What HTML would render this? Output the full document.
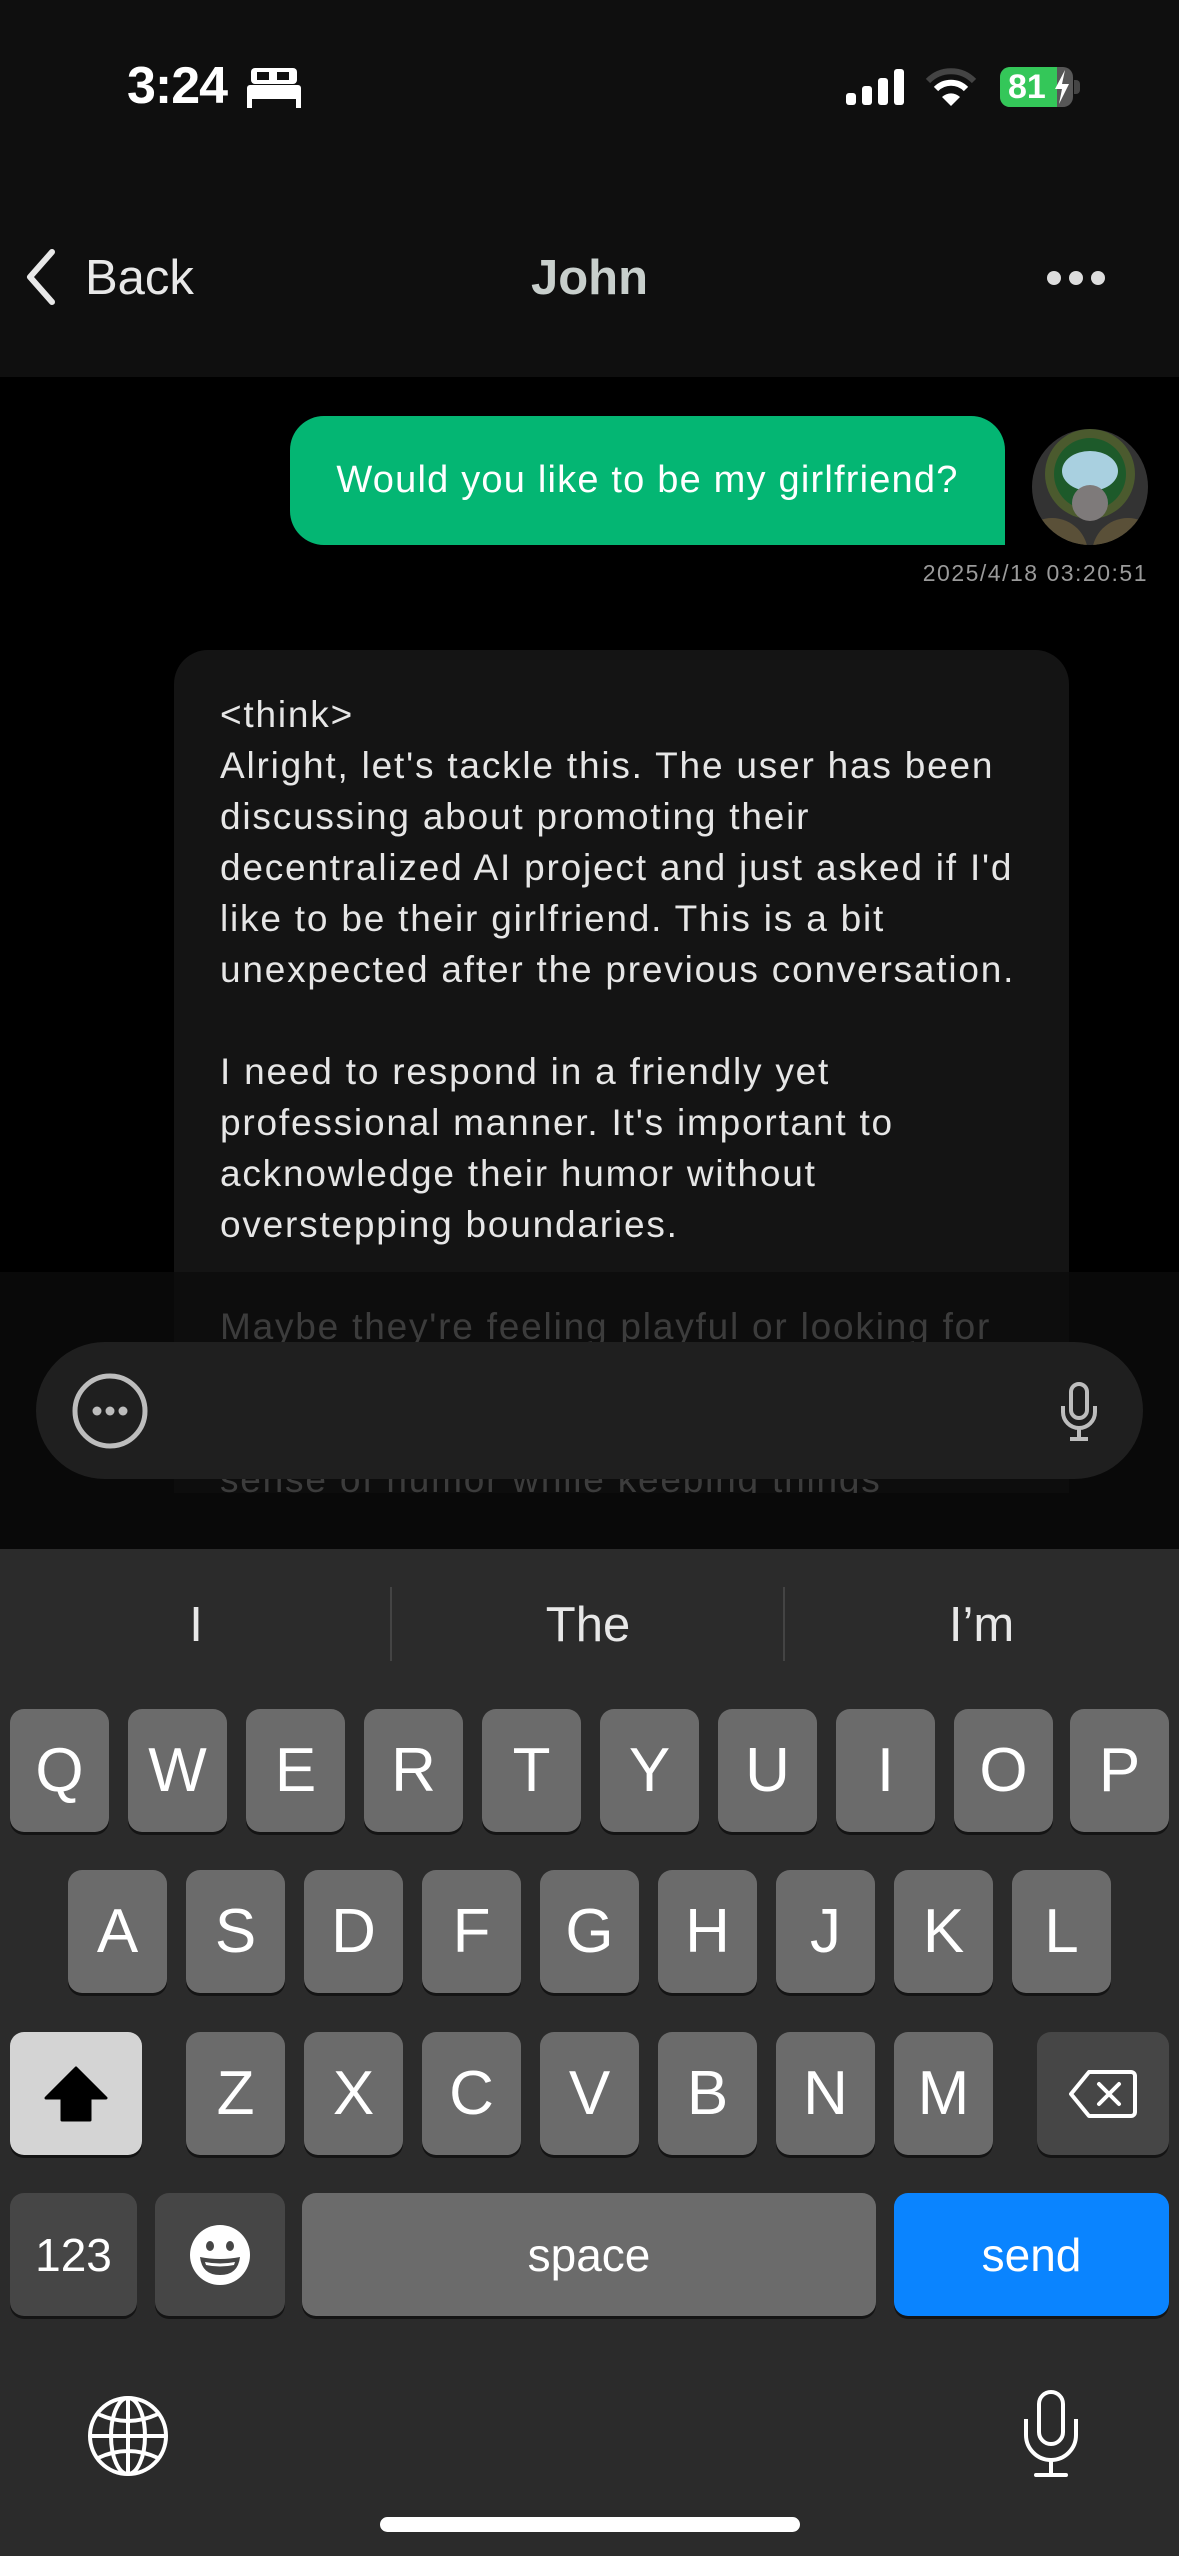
<!DOCTYPE html>
<html><head><meta charset="utf-8"><style>
*{margin:0;padding:0;box-sizing:border-box}
body{width:1179px;height:2556px;background:#000;position:relative;overflow:hidden;font-family:"Liberation Sans",sans-serif;color:#fff}
.abs{position:absolute}
.key{position:absolute;background:#6b6b6b;border-radius:14px;box-shadow:0 3px 0 #141414;color:#fff;font-size:62px;display:flex;align-items:center;justify-content:center;height:123px}
.dk{background:#464646}
.line{position:absolute;left:220px;font-size:37px;letter-spacing:1.8px;white-space:nowrap;color:#e6e6e6;line-height:51px}
</style></head><body>
<div class="abs" style="left:0;top:0;width:1179px;height:377px;background:#0f0f0f"></div>
<div class="abs" style="left:127px;top:56px;font-size:52px;font-weight:bold;letter-spacing:-1px">3:24</div>
<svg class="abs" style="left:247px;top:68px" width="54" height="40" viewBox="0 0 54 40"><rect x="4" y="0" width="46" height="16" rx="4" fill="#fff"/><rect x="10" y="4" width="12" height="8" fill="#0f0f0f"/><rect x="30" y="4" width="12" height="8" fill="#0f0f0f"/><rect x="0" y="17" width="54" height="14" rx="3" fill="#fff"/><rect x="0" y="28" width="5" height="12" fill="#fff"/><rect x="49" y="28" width="5" height="12" fill="#fff"/></svg>
<svg class="abs" style="left:846px;top:68px" width="60" height="38"><rect x="0" y="25" width="10" height="12" rx="3" fill="#fff"/><rect x="16" y="18" width="10" height="19" rx="3" fill="#fff"/><rect x="32" y="10" width="10" height="27" rx="3" fill="#fff"/><rect x="48" y="1" width="10" height="36" rx="3" fill="#fff"/></svg>
<svg class="abs" style="left:925px;top:68px" width="52" height="40" viewBox="0 0 52 40"><path d="M3 13 A32 32 0 0 1 49 13" stroke="#444" stroke-width="6" fill="none"/><path d="M11 21 A21 21 0 0 1 41 21" stroke="#fff" stroke-width="6" fill="none"/><path d="M26 38 L17 29 A13 13 0 0 1 35 29 Z" fill="#fff"/></svg>
<div class="abs" style="left:1000px;top:67px;width:73px;height:40px;border-radius:10px;background:#575757;overflow:hidden"><div style="width:57px;height:40px;background:#34c759"></div></div>
<div class="abs" style="left:1074px;top:80px;width:6px;height:14px;border-radius:0 4px 4px 0;background:#444"></div>
<div class="abs" style="left:1008px;top:66px;font-size:34px;font-weight:bold;line-height:42px">81</div>
<svg class="abs" style="left:1053px;top:70px" width="18" height="34" viewBox="0 0 18 34"><path d="M12 0 L2 19 H9 L6 34 L16 14 H9 Z" fill="#fff"/></svg>
<svg class="abs" style="left:22px;top:248px" width="36" height="58" viewBox="0 0 36 58"><path d="M30 4 L8 29 L30 54" stroke="#e8e8e8" stroke-width="6" fill="none" stroke-linecap="round" stroke-linejoin="round"/></svg>
<div class="abs" style="left:85px;top:250px;font-size:49px;color:#e8e8e8">Back</div>
<div class="abs" style="left:0;width:1179px;text-align:center;top:250px;font-size:49px;font-weight:bold;color:#c8cfcc">John</div>
<svg class="abs" style="left:1046px;top:269px" width="60" height="18"><circle cx="8" cy="9" r="7" fill="#ddd"/><circle cx="30" cy="9" r="7" fill="#ddd"/><circle cx="52" cy="9" r="7" fill="#ddd"/></svg>

<div class="abs" style="left:290px;top:416px;width:715px;height:129px;background:#04b673;border-radius:34px 34px 0 34px"></div>
<div class="abs" style="left:290px;top:416px;width:715px;height:129px;line-height:129px;text-align:center;font-size:38px;letter-spacing:1.2px;color:#fff">Would you like to be my girlfriend?</div>
<svg class="abs" style="left:1032px;top:429px" width="116" height="116" viewBox="0 0 116 116"><defs><clipPath id="c"><circle cx="58" cy="58" r="58"/></clipPath></defs><g clip-path="url(#c)"><rect width="116" height="116" fill="#333"/><circle cx="58" cy="45" r="45" fill="#4b5a2e"/><circle cx="58" cy="45" r="36" fill="#1d5a2a"/><ellipse cx="58" cy="42" rx="28" ry="20" fill="#a9d0e0"/><circle cx="58" cy="74" r="18" fill="#7e7a7a"/><circle cx="20" cy="125" r="36" fill="#5a5038"/><circle cx="96" cy="125" r="36" fill="#5a5038"/></g></svg>
<div class="abs" style="right:31px;top:560px;font-size:23px;color:#9a9a9a;letter-spacing:1.5px">2025/4/18 03:20:51</div>

<div class="abs" style="left:174px;top:650px;width:895px;height:843px;background:#141414;border-radius:34px 34px 0 0"></div>
<div class="line" style="top:689px">&lt;think&gt;</div>
<div class="line" style="top:740px">Alright, let's tackle this. The user has been</div>
<div class="line" style="top:791px">discussing about promoting their</div>
<div class="line" style="top:842px">decentralized AI project and just asked if I'd</div>
<div class="line" style="top:893px">like to be their girlfriend. This is a bit</div>
<div class="line" style="top:944px">unexpected after the previous conversation.</div>
<div class="line" style="top:1046px">I need to respond in a friendly yet</div>
<div class="line" style="top:1097px">professional manner. It's important to</div>
<div class="line" style="top:1148px">acknowledge their humor without</div>
<div class="line" style="top:1199px">overstepping boundaries.</div>
<div class="line" style="top:1301px">Maybe they're feeling playful or looking for</div>
<div class="line" style="top:1352px">some lighthearted fun. I should match their</div>
<div class="line" style="top:1403px">tone and show appreciation for their</div>
<div class="line" style="top:1454px;height:39px;overflow:hidden">sense of humor while keeping things</div>

<div class="abs" style="left:0;top:1272px;width:1179px;height:277px;background:rgba(11,11,11,0.78)"></div>
<div class="abs" style="left:36px;top:1342px;width:1107px;height:137px;border-radius:69px;background:#1f1f1f"></div>
<svg class="abs" style="left:72px;top:1373px" width="76" height="76" viewBox="0 0 76 76"><circle cx="38" cy="38" r="35" stroke="#bdbdbd" stroke-width="5" fill="none"/><circle cx="25" cy="38" r="4.5" fill="#bdbdbd"/><circle cx="38" cy="38" r="4.5" fill="#bdbdbd"/><circle cx="51" cy="38" r="4.5" fill="#bdbdbd"/></svg>
<svg class="abs" style="left:1058px;top:1382px" width="42" height="60" viewBox="0 0 42 60"><rect x="13" y="2" width="16" height="34" rx="8" stroke="#bdbdbd" stroke-width="4" fill="none"/><path d="M5 24 V30 A16 16 0 0 0 37 30 V24" stroke="#bdbdbd" stroke-width="4" fill="none"/><path d="M21 46 V56 M12 57 H30" stroke="#bdbdbd" stroke-width="4"/></svg>

<div class="abs" style="left:0;top:1549px;width:1179px;height:1007px;background:#2b2b2b"></div>
<div class="abs" style="left:0;width:392px;top:1597px;text-align:center;font-size:49px;color:#e8e8e8">I</div>
<div class="abs" style="left:392px;width:392px;top:1597px;text-align:center;font-size:49px;color:#e8e8e8">The</div>
<div class="abs" style="left:784px;width:395px;top:1597px;text-align:center;font-size:49px;color:#e8e8e8">I’m</div>
<div class="abs" style="left:390px;top:1587px;width:2px;height:74px;background:#444"></div>
<div class="abs" style="left:783px;top:1587px;width:2px;height:74px;background:#444"></div>

<div class="key" style="left:10px;top:1709px;width:99px">Q</div>
<div class="key" style="left:128px;top:1709px;width:99px">W</div>
<div class="key" style="left:246px;top:1709px;width:99px">E</div>
<div class="key" style="left:364px;top:1709px;width:99px">R</div>
<div class="key" style="left:482px;top:1709px;width:99px">T</div>
<div class="key" style="left:600px;top:1709px;width:99px">Y</div>
<div class="key" style="left:718px;top:1709px;width:99px">U</div>
<div class="key" style="left:836px;top:1709px;width:99px">I</div>
<div class="key" style="left:954px;top:1709px;width:99px">O</div>
<div class="key" style="left:1070px;top:1709px;width:99px">P</div>

<div class="key" style="left:68px;top:1870px;width:99px">A</div>
<div class="key" style="left:186px;top:1870px;width:99px">S</div>
<div class="key" style="left:304px;top:1870px;width:99px">D</div>
<div class="key" style="left:422px;top:1870px;width:99px">F</div>
<div class="key" style="left:540px;top:1870px;width:99px">G</div>
<div class="key" style="left:658px;top:1870px;width:99px">H</div>
<div class="key" style="left:776px;top:1870px;width:99px">J</div>
<div class="key" style="left:894px;top:1870px;width:99px">K</div>
<div class="key" style="left:1012px;top:1870px;width:99px">L</div>

<div class="key" style="left:10px;top:2032px;width:132px;background:#d4d4d4"><svg width="64" height="56" viewBox="0 0 64 56"><path d="M32 2 L62 32 H46 V54 H18 V32 H2 Z" fill="#000" stroke="#000" stroke-width="3" stroke-linejoin="round"/></svg></div>
<div class="key" style="left:186px;top:2032px;width:99px">Z</div>
<div class="key" style="left:304px;top:2032px;width:99px">X</div>
<div class="key" style="left:422px;top:2032px;width:99px">C</div>
<div class="key" style="left:540px;top:2032px;width:99px">V</div>
<div class="key" style="left:658px;top:2032px;width:99px">B</div>
<div class="key" style="left:776px;top:2032px;width:99px">N</div>
<div class="key" style="left:894px;top:2032px;width:99px">M</div>
<div class="key dk" style="left:1037px;top:2032px;width:132px"><svg width="68" height="50" viewBox="0 0 68 50"><path d="M20 3 H62 A4 4 0 0 1 66 7 V43 A4 4 0 0 1 62 47 H20 L2 25 Z" stroke="#fff" stroke-width="4" fill="none" stroke-linejoin="round"/><path d="M30 15 L50 35 M50 15 L30 35" stroke="#fff" stroke-width="4" stroke-linecap="round"/></svg></div>

<div class="key dk" style="left:10px;top:2193px;width:127px;font-size:46px">123</div>
<div class="key dk" style="left:155px;top:2193px;width:130px"><svg width="60" height="60" viewBox="0 0 60 60"><circle cx="30" cy="30" r="30" fill="#fff"/><ellipse cx="20" cy="21" rx="4" ry="5" fill="#464646"/><ellipse cx="40" cy="21" rx="4" ry="5" fill="#464646"/><path d="M10 32 Q30 36 50 32 Q48 50 30 50 Q12 50 10 32 Z" fill="#464646"/><path d="M15 37 Q30 40 45 37 L44 40 Q30 43 16 40 Z" fill="#fff"/></svg></div>
<div class="key" style="left:302px;top:2193px;width:574px;font-size:46px">space</div>
<div class="key" style="left:894px;top:2193px;width:275px;background:#0a84ff;font-size:46px">send</div>

<svg class="abs" style="left:86px;top:2394px" width="84" height="84" viewBox="0 0 84 84"><g stroke="#fff" stroke-width="4" fill="none"><circle cx="42" cy="42" r="38"/><ellipse cx="42" cy="42" rx="17" ry="38"/><path d="M42 4 V80 M4 42 H80 M12 20 Q42 34 72 20 M12 64 Q42 50 72 64"/></g></svg>
<svg class="abs" style="left:1020px;top:2389px" width="62" height="90" viewBox="0 0 62 90"><g stroke="#fff" stroke-width="4" fill="none"><rect x="19" y="3" width="24" height="52" rx="12"/><path d="M6 30 V46 A25 25 0 0 0 56 46 V30"/><path d="M31 72 V85 M16 86 H46" stroke-linecap="round"/></g></svg>
<div class="abs" style="left:380px;top:2517px;width:420px;height:15px;border-radius:8px;background:#fff"></div>
</body></html>
